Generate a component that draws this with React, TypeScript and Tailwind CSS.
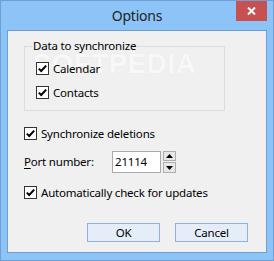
import React from "react";

function Check({ className = "" }: { className?: string }) {
  return (
    <span
      className={
        "relative inline-flex h-[13px] w-[13px] shrink-0 items-center justify-center border border-[#333333] bg-white " +
        className
      }
    >
      <svg width="11" height="11" viewBox="0 0 11 11">
        <path d="M1.8 5.6 L4.2 8 L9.2 2.6" fill="none" stroke="#000" strokeWidth="2" />
      </svg>
    </span>
  );
}

export default function App() {
  const font = { fontFamily: '"Noto Sans", "Open Sans", sans-serif' };
  return (
    <div
      className="relative h-[261px] w-[274px] overflow-hidden border border-[#6f9fd4] bg-[#8cc4f7] text-[11.5px] leading-[16px] tracking-[-0.2px] text-black"
      style={font}
    >
      {/* Title bar */}
      <div className="relative flex h-[29px] items-center justify-center">
        <span className="text-[14px] leading-[20px] tracking-[-0.2px] text-[#222222]">Options</span>
        <div className="absolute right-[6px] top-0 flex h-[20px] w-[31px] items-center justify-center bg-[#c75050]">
          <svg width="9" height="8" viewBox="0 0 9 8">
            <path d="M1 0.5 L8 7.5 M8 0.5 L1 7.5" stroke="#fff" strokeWidth="2" />
          </svg>
        </div>
      </div>

      {/* Client */}
      <div className="relative ml-[6px] h-[223px] w-[260px] border border-[#6e9dd0] bg-[#f0f0f0]">
        {/* watermark (behind content) */}
        <div
          className="pointer-events-none absolute left-[25px] top-[18px] z-0 text-[27px] font-bold leading-[30px] tracking-[1px] text-[#f8f8f8]"
          style={{ fontFamily: '"Liberation Sans", sans-serif', textShadow: "0 0 1px #e2e2e2" }}
        >
          SOFTPEDIA<span className="align-top text-[9px] font-normal">®</span>
        </div>

        <div className="relative z-10">
          <fieldset className="ml-[16px] mt-[7px] w-[201px] border border-[#dcdcdc] px-[11px] pb-[11px] pt-0">
            <legend className="ml-[-4px] px-[1px] leading-[16px]">Data to synchronize</legend>
            <div className="mt-[8px] flex h-[13px] items-center gap-[4px]">
              <Check />
              <span>Calendar</span>
            </div>
            <div className="mt-[11px] flex h-[13px] items-center gap-[4px]">
              <Check />
              <span>Contacts</span>
            </div>
          </fieldset>

          <div className="ml-[16px] mt-[16px] flex h-[13px] items-center gap-[4px]">
            <Check />
            <span>Synchronize deletions</span>
          </div>

          <div className="ml-[16px] mt-[11px] flex h-[22px] items-center">
            <span className="w-[88px]">
              <span className="underline underline-offset-2">P</span>ort number:
            </span>
            <div className="flex h-[22px] w-[49px] items-center border border-[#a9a9a9] bg-white pl-[2px]">
              21114
            </div>
            <div className="ml-[2px] flex h-[22px] w-[13px] flex-col justify-between">
              <div className="flex h-[10px] items-center justify-center border border-[#adadad] bg-[#e8e8e8]">
                <svg width="7" height="4" viewBox="0 0 7 4">
                  <path d="M0 4 L3.5 0 L7 4 Z" fill="#000" />
                </svg>
              </div>
              <div className="flex h-[11px] items-center justify-center border border-[#adadad] bg-[#e8e8e8]">
                <svg width="7" height="4" viewBox="0 0 7 4">
                  <path d="M0 0 L3.5 4 L7 0 Z" fill="#000" />
                </svg>
              </div>
            </div>
          </div>

          <div className="ml-[16px] mt-[13px] flex h-[13px] items-center gap-[4px]">
            <Check />
            <span>Automatically check for updates</span>
          </div>

          <div className="mt-[24px] flex justify-end gap-[15px] pr-[18px]">
            <div className="flex h-[19px] w-[73px] items-center justify-center border border-[#8cb3dd] bg-[#e5eef8]">
              OK
            </div>
            <div className="flex h-[19px] w-[73px] items-center justify-center border border-[#8cb3dd] bg-[#e5eef8]">
              Cancel
            </div>
          </div>
        </div>
      </div>
    </div>
  );
}
